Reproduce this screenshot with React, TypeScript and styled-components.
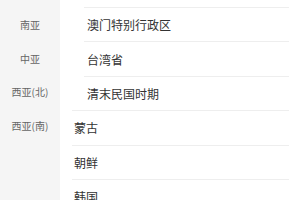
import React from 'react';
import styled, { createGlobalStyle } from 'styled-components';

const GlobalStyle = createGlobalStyle`
    html, body {
        margin: 0;
        padding: 0;
        background: #ffffff;
        overflow: hidden;
    }

    body {
        font-family: 'Noto Sans CJK SC', 'Noto Sans', sans-serif;
    }
`

    // Data
const regions = ['南亚', '中亚', '西亚(北)', '西亚(南)'];

interface Area {
    name: string
    children?: string[]
}

const areas: Area[] = [
    { name: '中国', children: ['澳门特别行政区', '台湾省', '清末民国时期'] },
    { name: '蒙古' },
    { name: '朝鲜' },
    { name: '韩国' },
];

    // Components
const StyledPage = styled.div`
    display: flex;
    width: 300px;
    height: 200px;
    overflow: hidden;
    background: #ffffff;
`

const StyledSidebar = styled.div`
    display: flex;
    flex-direction: column;
    flex: 0 0 60px;
    padding-top: 8.3px;
    background: #f5f5f5;
`

const StyledSideItem = styled.div`
    flex: 0 0 33.4px;
    display: flex;
    align-items: center;
    justify-content: center;
    font-size: 10px;
    color: #666666;
    white-space: nowrap;
`

const StyledList = styled.div`
    flex: 1;
    display: flex;
    flex-direction: column;
    padding: 7px 11px 0 12px;
`

const StyledGroup = styled.div`
    display: flex;
    flex-direction: column;
    padding-left: 12px;
`

interface RowProps {
    nested?: boolean
}

const StyledRow = styled.div<RowProps>`
    flex: 0 0 34.4px;
    box-sizing: border-box;
    display: flex;
    align-items: center;
    padding-left: ${({ nested }) => nested ? '3px' : '2px'};
    border-top: 1px solid #eeeeee;
    font-size: 12px;
    color: #333333;
    white-space: nowrap;
`

export default function App() {
    return (
        <>
            <GlobalStyle />
            <StyledPage>
                <StyledSidebar>
                    {regions.map((r) => (
                        <StyledSideItem key={r}>{r}</StyledSideItem>
                    ))}
                </StyledSidebar>
                <StyledList>
                    {areas.map((a) => a.children ? (
                        <StyledGroup key={a.name}>
                            {a.children.map((c) => (
                                <StyledRow key={c} nested>{c}</StyledRow>
                            ))}
                        </StyledGroup>
                    ) : (
                        <StyledRow key={a.name}>{a.name}</StyledRow>
                    ))}
                </StyledList>
            </StyledPage>
        </>
    );
}
